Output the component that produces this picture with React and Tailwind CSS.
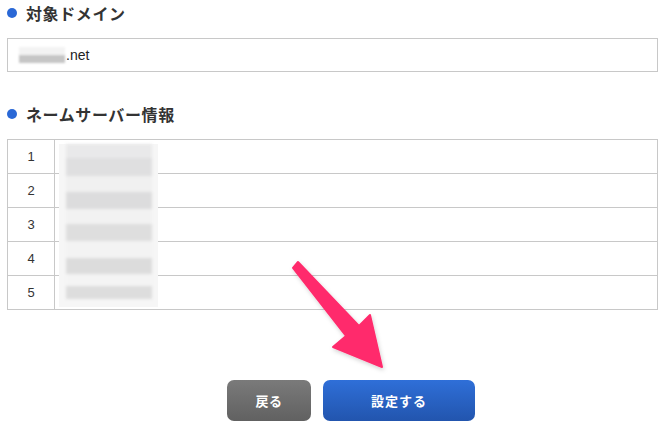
import React from "react";

const font = { fontFamily: '"Noto Sans CJK JP", "Noto Sans", sans-serif' };

function Heading({ children }) {
  return (
    <div className="flex items-center h-[20px]">
      <span className="ml-[7px] w-[10px] h-[10px] rounded-full bg-[#2a68d6]" />
      <span className="ml-[9px] text-[16px] leading-[20px] font-bold tracking-[0.6px] text-[#333]">
        {children}
      </span>
    </div>
  );
}

const bands = [
  ["h-[14px]", "bg-[#e9e9ea]"],
  ["h-[18px]", "bg-[#dfdfe0]"],
  ["h-[16px]", "bg-[#f0f0f0]"],
  ["h-[17px]", "bg-[#dcdcdd]"],
  ["h-[15px]", "bg-[#f2f2f2]"],
  ["h-[17px]", "bg-[#dedede]"],
  ["h-[17px]", "bg-[#f3f3f3]"],
  ["h-[16px]", "bg-[#dcdcdc]"],
  ["h-[12px]", "bg-[#f4f4f4]"],
  ["h-[13px]", "bg-[#dddddd]"],
];

export default function App() {
  return (
    <div className="relative w-[664px] h-[427px] bg-white overflow-hidden text-[#333]" style={font}>
      <div className="pt-[3px]">
        <Heading>対象ドメイン</Heading>
      </div>
      <div className="mx-[7px] mt-[15px] w-[651px] h-[34px] border border-[#c8c8c8] flex items-center pl-[11px]">
        <span className="relative w-[46px] h-[17px] mr-[1px]">
          <span className="absolute left-0 top-0 w-[46px] h-[8px] bg-[#f3f3f3] blur-[1px]" />
          <span className="absolute left-0 top-[8px] w-[46px] h-[8px] bg-[#c6c6c6] blur-[1px]" />
        </span>
        <span className="text-[14px] text-[#222]" style={{ fontFamily: '"Liberation Sans", Arial, sans-serif' }}>.net</span>
      </div>

      <div className="mt-[32px]">
        <Heading>ネームサーバー情報</Heading>
      </div>

      <div className="relative mx-[7px] mt-[15px] w-[651px] border-t border-l border-[#c8c8c8]">
        {[1, 2, 3, 4, 5].map((n) => (
          <div key={n} className="flex h-[34px] border-b border-r border-[#c8c8c8]">
            <div className="w-[47px] border-r border-[#c8c8c8] flex items-center justify-center text-[13px] text-[#333]" style={{ fontFamily: '"Liberation Sans", Arial, sans-serif' }}>
              {n}
            </div>
            <div className="flex-1" />
          </div>
        ))}
        <div className="absolute left-[51px] top-[4px] w-[99px] h-[163px] bg-[#f6f6f6] blur-[0.5px]">
          <div className="ml-[7px] w-[86px] flex flex-col blur-[1.5px]">
            {bands.map(([h, bg], i) => (
              <div key={i} className={`${h} ${bg}`} />
            ))}
          </div>
        </div>
      </div>

      <div className="flex mt-[70px] pl-[227px] gap-[12px]">
        <button className="w-[84px] h-[41px] rounded-[7px] bg-gradient-to-b from-[#7a7a7a] to-[#616161] text-white text-[13px] font-bold tracking-[0.5px]">
          戻る
        </button>
        <button className="w-[152px] h-[41px] rounded-[7px] bg-gradient-to-b from-[#2f6fd8] to-[#2255ae] text-white text-[13px] font-bold tracking-[1px]">
          設定する
        </button>
      </div>

      <svg className="absolute left-0 top-0 pointer-events-none" width="664" height="427" viewBox="0 0 664 427">
        <defs>
          <filter id="sh" x="-20%" y="-20%" width="140%" height="140%">
            <feDropShadow dx="1" dy="2" stdDeviation="2" floodColor="#000" floodOpacity="0.18" />
          </filter>
        </defs>
        <polygon
          points="293,268 298,262 359,326 370,315 382,367 333,347 346,336"
          fill="#ff2b6c"
          stroke="#ff2b6c"
          strokeWidth="2"
          strokeLinejoin="round"
          filter="url(#sh)"
        />
      </svg>
    </div>
  );
}
